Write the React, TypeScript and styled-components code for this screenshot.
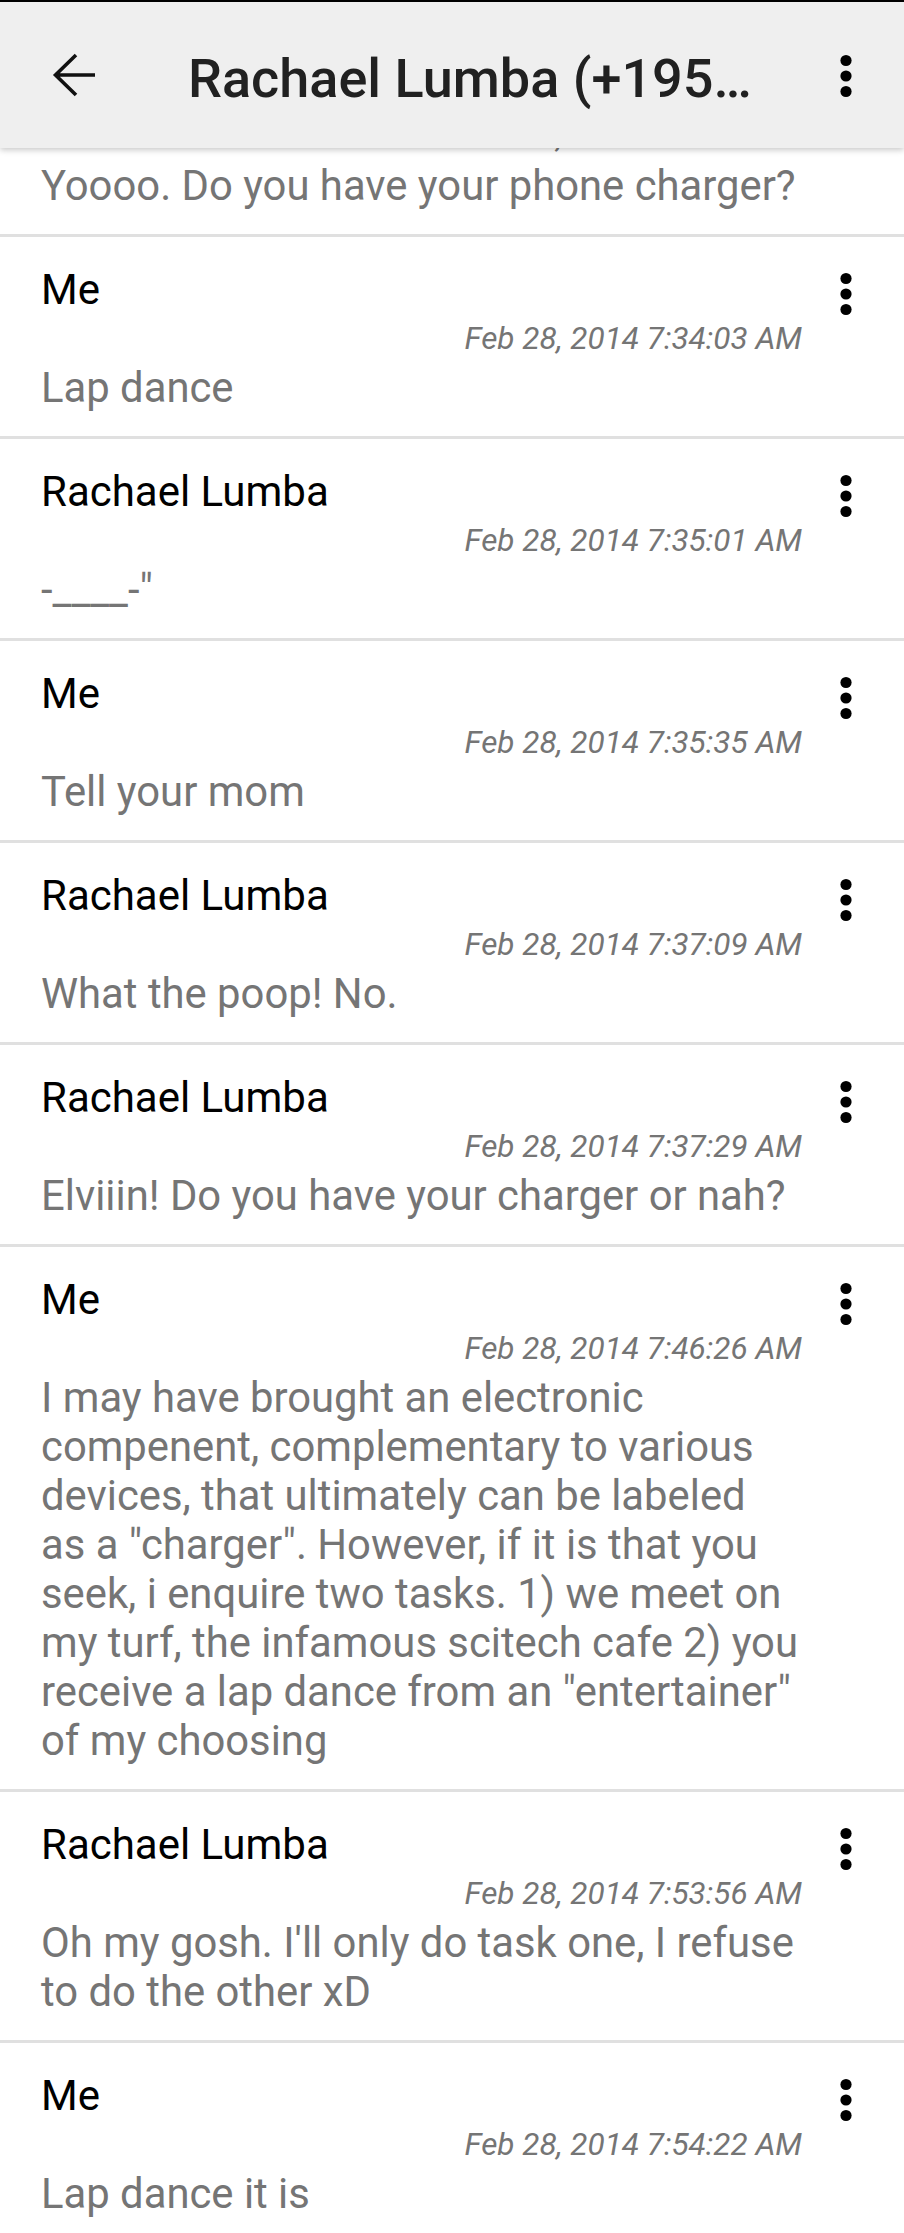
import React from "react";
import styled, { createGlobalStyle } from "styled-components";

const GlobalStyle = createGlobalStyle`
  html, body {
    margin: 0;
    padding: 0;
    background: #ffffff;
  }
  body {
    font-family: Roboto, "Noto Sans", "Liberation Sans", sans-serif;
    -webkit-font-smoothing: antialiased;
  }
  * { box-sizing: border-box; }
`;

const Screen = styled.div`
  width: 904px;
  height: 2233px;
  overflow: hidden;
  position: relative;
  background: #ffffff;
`;

const AppBar = styled.header`
  position: fixed;
  top: 0;
  left: 0;
  width: 904px;
  height: 148px;
  border-top: 2px solid #000000;
  background: #efefef;
  box-shadow: 0 2px 6px rgba(0, 0, 0, 0.22);
  display: flex;
  align-items: center;
  padding: 0 15px 0 0;
  z-index: 10;
`;

const BackButton = styled.button`
  border: 0;
  background: transparent;
  padding: 0;
  margin-left: 51px;
  width: 46px;
  height: 46px;
  display: flex;
  align-items: center;
  justify-content: center;
  color: #111111;
`;

const Title = styled.h1`
  flex: 1;
  margin: 0 0 0 91px;
  padding-top: 6px;
  font-size: 54px;
  font-weight: 500;
  line-height: 63px;
  color: #212121;
  white-space: nowrap;
  overflow: hidden;
`;

const IconButton = styled.button`
  border: 0;
  background: transparent;
  padding: 0;
  width: 86px;
  height: 46px;
  margin-top: 2px;
  display: flex;
  align-items: center;
  justify-content: center;
  color: #000000;
`;

const List = styled.main`
  padding-top: 35px;
`;

const Card = styled.article`
  display: grid;
  grid-template-columns: 1fr 86px;
  grid-template-rows: auto auto auto;
  row-gap: 7px;
  padding: 28px 15px 24px 41px;
  border-bottom: 3px solid #e0e0e0;
`;

const Sender = styled.div`
  grid-column: 1;
  grid-row: 1;
  font-size: 42px;
  line-height: 49px;
  color: #000000;
`;

const Stamp = styled.div`
  grid-column: 1;
  grid-row: 2;
  text-align: right;
  font-size: 31.5px;
  line-height: 35px;
  font-style: italic;
  color: #757575;
  padding-right: 1px;
`;

const Body = styled.p`
  grid-column: 1;
  grid-row: 3;
  margin: 0;
  font-size: 41.8px;
  line-height: 49px;
  color: #757575;
`;

const MenuCell = styled.button`
  grid-column: 2;
  grid-row: 1 / span 2;
  align-self: start;
  justify-self: center;
  margin-top: 6px;
  border: 0;
  background: transparent;
  padding: 0;
  width: 46px;
  height: 46px;
  display: flex;
  align-items: center;
  justify-content: center;
  color: #000000;
`;

const ArrowBack = () => (
  <svg width="46" height="46" viewBox="0 0 46 46" fill="none">
    <path
      d="M4 23 H44 M25 3 L4.5 23 L25 43"
      stroke="currentColor"
      strokeWidth="3.6"
      strokeLinejoin="miter"
    />
  </svg>
);

const MoreVert = () => (
  <svg width="20" height="46" viewBox="0 0 20 46">
    <circle cx="10" cy="7.5" r="5.6" fill="currentColor" />
    <circle cx="10" cy="23" r="5.6" fill="currentColor" />
    <circle cx="10" cy="38.5" r="5.6" fill="currentColor" />
  </svg>
);

type Message = { from: string; time: string; text: string };

const messages: Message[] = [
  { from: "Rachael Lumba", time: "Feb 28, 2014 7:33:48 AM", text: "Yoooo. Do you have your phone charger?" },
  { from: "Me", time: "Feb 28, 2014 7:34:03 AM", text: "Lap dance" },
  { from: "Rachael Lumba", time: "Feb 28, 2014 7:35:01 AM", text: "-____-\"" },
  { from: "Me", time: "Feb 28, 2014 7:35:35 AM", text: "Tell your mom" },
  { from: "Rachael Lumba", time: "Feb 28, 2014 7:37:09 AM", text: "What the poop! No." },
  { from: "Rachael Lumba", time: "Feb 28, 2014 7:37:29 AM", text: "Elviiin! Do you have your charger or nah?" },
  {
    from: "Me",
    time: "Feb 28, 2014 7:46:26 AM",
    text:
      "I may have brought an electronic compenent, complementary to various devices, that ultimately can be labeled as\u00a0a \"charger\". However, if it is that you seek, i enquire two tasks. 1) we meet on my turf, the infamous scitech cafe 2) you receive a lap dance from an \"entertainer\" of my choosing",
  },
  { from: "Rachael Lumba", time: "Feb 28, 2014 7:53:56 AM", text: "Oh my gosh. I'll only do task one, I refuse to do the other xD" },
  { from: "Me", time: "Feb 28, 2014 7:54:22 AM", text: "Lap dance it is" },
];

export default function App() {
  return (
    <Screen>
      <GlobalStyle />
      <AppBar>
        <BackButton aria-label="Back">
          <ArrowBack />
        </BackButton>
        <Title>Rachael Lumba (+195…</Title>
        <IconButton aria-label="More options">
          <MoreVert />
        </IconButton>
      </AppBar>
      <List>
        {messages.map((m, i) => (
          <Card key={i}>
            <Sender>{m.from}</Sender>
            <MenuCell aria-label="Message options">
              <MoreVert />
            </MenuCell>
            <Stamp>{m.time}</Stamp>
            <Body>{m.text}</Body>
          </Card>
        ))}
      </List>
    </Screen>
  );
}
